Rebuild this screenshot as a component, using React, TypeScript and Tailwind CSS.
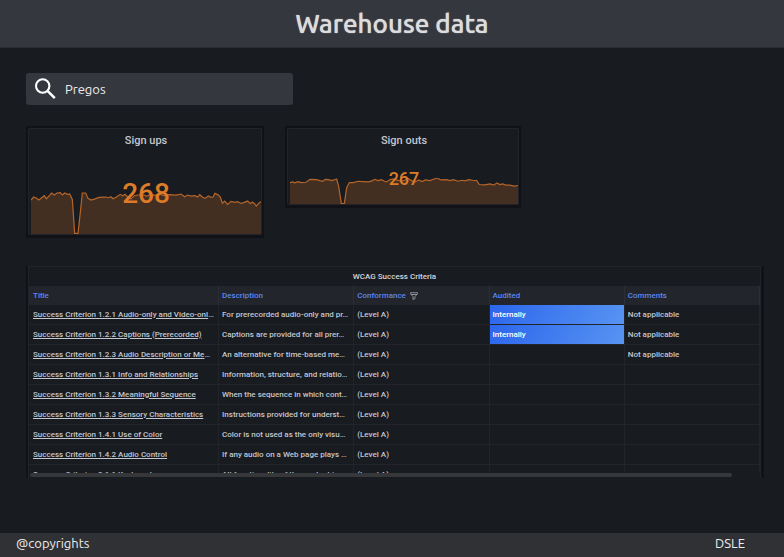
import React from "react";

const UPS =
  "0,24 8,15 16,18 24,24 32,17 40,11 46,20 56,10 62,3 70,9 78,3 88,2 94,9 101,3 110,7 116,6 124,22 131,123 141,123 148,60 154,3 164,3 171,19 180,24 190,21 204,16 224,15 232,17 240,14 246,20 256,15 268,7 275,11 282,7 290,15 300,21 310,11 320,9 340,9 348,13 358,7 370,10 384,6 400,11 415,8 435,9 450,6 461,14 470,9 480,12 492,11 500,15 506,8 514,15 522,19 532,12 540,16 546,15 552,4 562,9 568,15 574,33 581,27 590,37 600,28 612,31 620,29 630,34 640,31 650,27 658,35 664,30 670,34 676,42 683,33 690,29";

const OUTS =
  "0,14 8,12 14,15 24,11 34,14 48,13 60,4 80,5 90,8 98,10 106,4 116,5 124,8 132,6 140,3 146,26 154,79 163,79 170,30 178,14 190,14 204,10 220,11 236,12 248,8 254,4 264,8 274,5 284,10 290,12 300,5 312,3 326,8 340,9 354,1 364,8 376,12 386,6 396,11 406,6 420,8 430,4 442,0 452,6 470,5 480,8 490,5 504,10 516,7 526,9 536,5 548,7 560,8 568,20 584,21 600,18 612,22 620,15 630,20 638,18 648,22 660,22 672,25 684,23";

type ChartProps = { points: string; width: number; height: number; className: string };

function Sparkline({ points, width, height, className }: ChartProps) {
  return (
    <svg
      aria-hidden="true"
      viewBox={`0 0 ${width} ${height}`}
      preserveAspectRatio="none"
      className={className}
    >
      <polygon points={`0,${height} ${points} ${width},${height}`} fill="#432f22" />
      <polyline
        points={points}
        fill="none"
        stroke="#b5652a"
        strokeWidth="1.2"
        vectorEffect="non-scaling-stroke"
      />
    </svg>
  );
}

type Row = {
  title: string;
  cut?: boolean;
  description: string;
  audited?: string;
  comments?: string;
};

const ROWS: Row[] = [
  { title: "Success Criterion 1.2.1 Audio-only and Video-onl", cut: true, description: "For prerecorded audio-only and pr…", audited: "Internally", comments: "Not applicable" },
  { title: "Success Criterion 1.2.2 Captions (Prerecorded)", description: "Captions are provided for all prer…", audited: "Internally", comments: "Not applicable" },
  { title: "Success Criterion 1.2.3 Audio Description or Me", cut: true, description: "An alternative for time-based me…", comments: "Not applicable" },
  { title: "Success Criterion 1.3.1 Info and Relationships", description: "Information, structure, and relatio…" },
  { title: "Success Criterion 1.3.2 Meaningful Sequence", description: "When the sequence in which cont…" },
  { title: "Success Criterion 1.3.3 Sensory Characteristics", description: "Instructions provided for underst…" },
  { title: "Success Criterion 1.4.1 Use of Color", description: "Color is not used as the only visu…" },
  { title: "Success Criterion 1.4.2 Audio Control", description: "If any audio on a Web page plays …" },
  { title: "Success Criterion 2.1.1 Keyboard", description: "All functionality of the content i…" },
];

const CELL = "h-5 border-r border-b border-[#222429] px-[3px] py-0 whitespace-nowrap first:pl-1";
const HEAD = "h-[19px] border-r border-[#2c2e35] px-[3px] py-0 text-left font-medium whitespace-nowrap first:pl-1";

export default function App() {
  return (
    <div className="flex min-h-screen flex-col bg-[#181b1f] font-['Ubuntu','Noto_Sans',sans-serif] text-white">
      <header className="flex h-12 items-center justify-center border-b border-[#2a2c30] bg-[#35373f]">
        <h1 className="text-[26px] leading-8 font-medium text-[#dcdcdc] [text-shadow:0_0_1px_#dcdcdc]">Warehouse data</h1>
      </header>

      <main className="flex-1 pt-[25px] pr-5 pl-[26px]">
        <label className="flex h-8 w-[267px] items-center gap-[7px] rounded-[3px] bg-[#35373f] pl-2">
          <svg viewBox="0 0 24 24" className="h-6 w-6 shrink-0" fill="none" stroke="white" aria-hidden="true">
            <circle cx="8.7" cy="9" r="6.7" strokeWidth="2.1" />
            <path d="M13.5 13.8 20.8 21.2" strokeWidth="2.5" />
          </svg>
          <input
            type="text"
            aria-label="Search"
            defaultValue="Pregos"
            className="w-full min-w-0 bg-transparent text-[13px] leading-5 text-[#ededed] outline-none"
          />
        </label>

        <div className="mt-[21px] flex items-start gap-[21px] font-['Roboto',sans-serif]">
          <section className="w-[238px] border-2 border-[#111217] bg-[#181b1f]">
            <div className="rounded-[2px] border border-[#222429] pl-[2px]">
              <h2 className="pt-1 text-center text-[11px] leading-4 font-medium text-[#c4c6d0]">Sign ups</h2>
              <div className="relative mt-[43px]">
                <Sparkline points={UPS} width={690} height={125} className="block h-[42px] w-full" />
                <p className="absolute inset-x-0 top-[-14px] text-center text-[28px] leading-8 font-medium text-[#dd7b28]">268</p>
              </div>
            </div>
            <div className="h-px bg-[#111217]" />
          </section>
          <section className="w-[236px] border-2 border-[#111217] bg-[#181b1f]">
            <div className="rounded-[2px] border border-[#222429] pl-[2px]">
              <h2 className="pt-1 text-center text-[11px] leading-4 font-medium text-[#c4c6d0]">Sign outs</h2>
              <div className="relative mt-[29px]">
                <Sparkline points={OUTS} width={684} height={80} className="block h-[26px] w-full" />
                <p className="absolute inset-x-0 top-[-11px] text-center text-[18px] leading-6 font-medium text-[#dd7b28]">267</p>
              </div>
            </div>
            <div className="h-px bg-[#111217]" />
          </section>
        </div>

        <section className="mt-7 border-r-[3px] border-l-2 border-[#111217] font-['Roboto',sans-serif] text-[8px] leading-4 text-[#c4c6d0]">
          <div className="border-x border-t border-[#222429]">
            <h2 className="h-[19px] pt-[2px] text-center font-medium text-[#d4d6dd]">WCAG Success Criteria</h2>
            <div className="h-[187px] overflow-hidden">
              <table className="w-full table-fixed border-separate border-spacing-0 font-medium">
                <colgroup>
                  <col className="w-[26%]" />
                  <col className="w-[18.5%]" />
                  <col className="w-[18.5%]" />
                  <col className="w-[18.5%]" />
                  <col className="w-[18.5%]" />
                </colgroup>
                <thead className="bg-[#22252b] text-[#5b87f0]">
                  <tr>
                    <th scope="col" className={HEAD}>Title</th>
                    <th scope="col" className={HEAD}>Description</th>
                    <th scope="col" className={HEAD}>
                      <span className="flex items-center gap-1">
                        Conformance
                        <button type="button" aria-label="Filter conformance">
                          <svg viewBox="0 0 16 16" className="h-2 w-2" fill="none" stroke="#9a9ca5" strokeWidth="1.8" strokeLinejoin="round">
                            <path d="M1 1.5h14v2.2L10 9v4.2L6 15V9L1 3.7zM2 5h12" />
                          </svg>
                        </button>
                      </span>
                    </th>
                    <th scope="col" className={HEAD}>Audited</th>
                    <th scope="col" className={HEAD}>Comments</th>
                  </tr>
                </thead>
                <tbody>
                  {ROWS.map((row) => (
                    <tr key={row.title}>
                      <td className={CELL}>
                        <a href="#" className="underline">{row.title}</a>
                        {row.cut && "…"}
                      </td>
                      <td className={CELL}>{row.description}</td>
                      <td className={CELL}>(Level A)</td>
                      <td className={row.audited ? `${CELL} bg-linear-[120deg] from-[#2c66ec] to-[#5794f2] text-white` : CELL}>
                        {row.audited}
                      </td>
                      <td className={CELL}>{row.comments}</td>
                    </tr>
                  ))}
                </tbody>
              </table>
            </div>
            <div className="pb-px">
              <div className="ml-px h-1 w-[96%] rounded-full bg-[#35373b]" />
            </div>
          </div>
        </section>
      </main>

      <footer className="flex h-6 items-center justify-between bg-[#2f3135] pr-[39px] pb-1 pl-4 text-[13px] leading-5 text-[#ededed]">
        <span>@copyrights</span>
        <span>DSLE</span>
      </footer>
    </div>
  );
}
